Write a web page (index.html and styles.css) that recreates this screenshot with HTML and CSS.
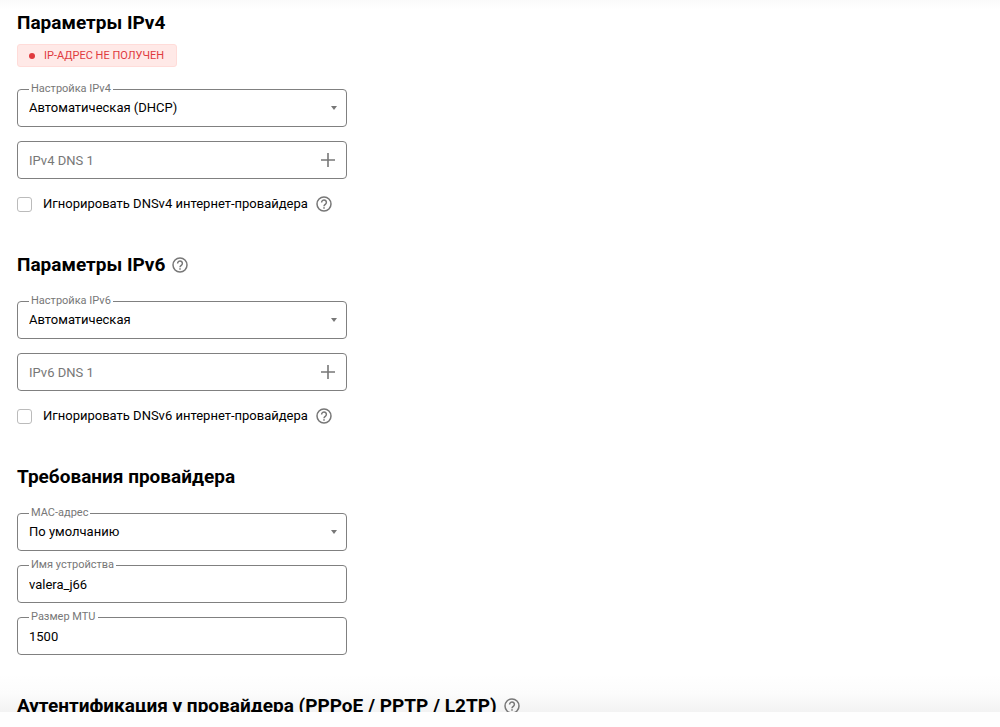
FILE: index.html
```html
<!DOCTYPE html>
<html lang="ru">
<head>
<meta charset="utf-8">
<title>Параметры подключения</title>
<link rel="stylesheet" href="styles.css">
</head>
<body>
<svg class="sprite" aria-hidden="true">
  <symbol id="help" viewBox="0 0 16 16">
    <circle cx="8" cy="8" r="7" fill="none" stroke="currentColor" stroke-width="1.5"/>
    <path d="M5.600 6.400a2.400 2.400 0 1 1 3.800 1.900C8.500 9 8 9.300 8 10.300" fill="none" stroke="currentColor" stroke-width="1.5"/>
    <rect x="7.250" y="11.200" width="1.500" height="1.500" fill="currentColor"/>
  </symbol>
  <symbol id="plus" viewBox="0 0 14 14">
    <path d="M7 0v14M0 7h14" fill="none" stroke="currentColor" stroke-width="1.6"/>
  </symbol>
  <symbol id="arrow" viewBox="0 0 6 4">
    <path d="M0 0h6L3 4z" fill="currentColor"/>
  </symbol>
</svg>
<main class="content">
  <section class="section">
    <h2 class="title">Параметры IPv4</h2>
    <p class="status"><span class="dot"></span>IP-АДРЕС НЕ ПОЛУЧЕН</p>
    <div class="fields">
      <div class="field">
        <label class="caption" for="ipv4">Настройка IPv4</label>
        <select class="control" id="ipv4"><option>Автоматическая (DHCP)</option></select>
        <svg class="arrow"><use href="#arrow"/></svg>
      </div>
      <div class="field">
        <input class="control" type="text" placeholder="IPv4 DNS 1" aria-label="IPv4 DNS 1">
        <button class="add" type="button" aria-label="Добавить DNS"><svg class="plus"><use href="#plus"/></svg></button>
      </div>
    </div>
    <div class="check">
      <input class="box" type="checkbox" id="ignore4">
      <label for="ignore4">Игнорировать DNSv4 интернет-провайдера</label>
      <button class="hint" type="button" aria-label="Справка"><svg class="help"><use href="#help"/></svg></button>
    </div>
  </section>

  <section class="section">
    <h2 class="title">Параметры IPv6 <button class="hint" type="button" aria-label="Справка"><svg class="help"><use href="#help"/></svg></button></h2>
    <div class="fields">
      <div class="field">
        <label class="caption" for="ipv6">Настройка IPv6</label>
        <select class="control" id="ipv6"><option>Автоматическая</option></select>
        <svg class="arrow"><use href="#arrow"/></svg>
      </div>
      <div class="field">
        <input class="control" type="text" placeholder="IPv6 DNS 1" aria-label="IPv6 DNS 1">
        <button class="add" type="button" aria-label="Добавить DNS"><svg class="plus"><use href="#plus"/></svg></button>
      </div>
    </div>
    <div class="check">
      <input class="box" type="checkbox" id="ignore6">
      <label for="ignore6">Игнорировать DNSv6 интернет-провайдера</label>
      <button class="hint" type="button" aria-label="Справка"><svg class="help"><use href="#help"/></svg></button>
    </div>
  </section>

  <section class="section">
    <h2 class="title">Требования провайдера</h2>
    <div class="fields">
      <div class="field">
        <label class="caption" for="mac">MAC-адрес</label>
        <select class="control" id="mac"><option>По умолчанию</option></select>
        <svg class="arrow"><use href="#arrow"/></svg>
      </div>
      <div class="field">
        <label class="caption" for="host">Имя устройства</label>
        <input class="control" type="text" id="host" value="valera_j66">
      </div>
      <div class="field">
        <label class="caption" for="mtu">Размер MTU</label>
        <input class="control" type="text" id="mtu" value="1500">
      </div>
    </div>
  </section>

  <section class="section">
    <h2 class="title">Аутентификация у провайдера (PPPoE / PPTP / L2TP) <button class="hint" type="button" aria-label="Справка"><svg class="help"><use href="#help"/></svg></button></h2>
  </section>
</main>
<footer class="footer"></footer>
</body>
</html>
```
FILE: styles.css
```css
* {
  box-sizing: border-box;
}

body {
  display: flex;
  flex-direction: column;
  height: 100vh;
  margin: 0;
  background: #fff;
  color: #000;
  font: 13px/20px Roboto, sans-serif;
}

.sprite {
  display: none;
}

.content {
  display: flex;
  flex: 1;
  flex-direction: column;
  gap: 39px;
  min-height: 0;
  padding: 11px 17px 0;
  overflow: hidden;
  background:
    linear-gradient(#fafafa, #fff) top / 100% 10px no-repeat,
    linear-gradient(#fff, #fcfcfc 50%, #f3f3f3) bottom / 100% 38px no-repeat;
}

.section {
  flex: none;
}

.title {
  display: flex;
  align-items: center;
  gap: 7px;
  margin: 0;
  color: #000;
  font-size: 19px;
  font-weight: 700;
  line-height: 24px;
}

.status {
  display: inline-flex;
  align-items: center;
  gap: 9px;
  height: 23px;
  margin: 9px 0 -2px;
  padding: 0 12px 0 11px;
  border: 1px solid #ffdcd9;
  border-radius: 3px;
  background: #ffe9e7;
  color: #e03a3e;
  font-size: 11px;
}

.dot {
  width: 6px;
  height: 6px;
  border-radius: 50%;
  background: #e03a3e;
}

.fields {
  display: grid;
  gap: 14px;
  max-width: 330px;
  margin-top: 24px;
}

.field {
  position: relative;
  display: flex;
  align-items: center;
  height: 38px;
  border: 1px solid #808080;
  border-radius: 4px;
}

.caption {
  position: absolute;
  top: -9px;
  left: 11px;
  padding: 0 2px;
  background: #fff;
  color: #777;
  font-size: 11px;
  line-height: 16px;
}

.control {
  flex: 1;
  min-width: 0;
  height: 100%;
  padding: 0 11px;
  border: 0;
  outline: 0;
  appearance: none;
  background: none;
  color: #000;
  font: inherit;
}

.control::placeholder {
  color: #777;
  opacity: 1;
}

.arrow {
  position: absolute;
  right: 9px;
  width: 6px;
  height: 4px;
  color: #777;
  pointer-events: none;
}

.add,
.hint {
  display: flex;
  padding: 0;
  border: 0;
  background: none;
  color: #777;
}

.add {
  margin-right: 11px;
}

.plus {
  width: 14px;
  height: 14px;
}

.help {
  width: 16px;
  height: 16px;
}

.check {
  display: flex;
  align-items: center;
  gap: 8px;
  margin-top: 15px;
}

.box {
  width: 15px;
  height: 15px;
  margin: 0 3px 0 0;
  border: 1px solid #bbb;
  border-radius: 3px;
  appearance: none;
  background: #fff;
}

.footer {
  flex: none;
  height: 15px;
  background: #fefefe;
}
```
